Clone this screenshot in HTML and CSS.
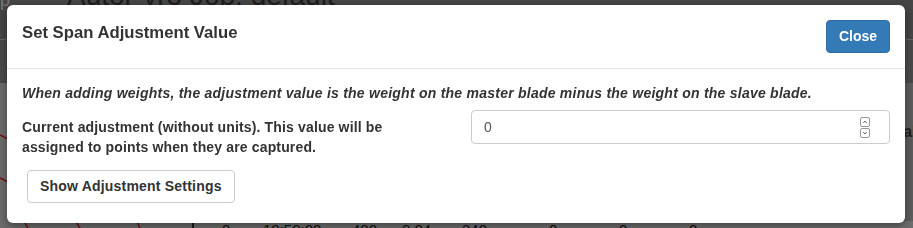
FILE: index.html
```html
<!DOCTYPE html>
<html>
  <head>
    <meta charset="UTF-8" />
    <title>Autor-vro | Job</title>
    <link rel="stylesheet" href="styles.css">
  </head>
  <body>
    <div class="page">
      <div class="topbar">
        <span class="brand">p</span>
        <h1 class="job-title">Autor-vro Job: default</h1>
      </div>
      <div class="toolbar"></div>
      <div class="content">
        <div class="chart">
          <svg viewBox="0 0 192 145" class="chart-lines">
            <polyline points="0,52 10,57" />
            <polyline points="0,95 8,99" />
            <polyline points="18,128 28,145" />
            <polyline points="70,130 80,145" />
            <polyline points="132,128 140,145" />
          </svg>
        </div>
        <div class="grid">
          <div class="grid-head"><span class="head-cell">Balance</span></div>
          <div class="grid-row">
            <span class="cell c-idx">0</span>
            <span class="cell c-time">10:50:00</span>
            <span class="cell c-rpm">400</span>
            <span class="cell c-amp">0.04</span>
            <span class="cell c-ang">340</span>
            <span class="cell c-a">0</span>
            <span class="cell c-b">0</span>
            <span class="cell c-c">0</span>
          </div>
        </div>
      </div>
    </div>

    <div class="backdrop"></div>

    <div class="modal">
      <div class="modal-header">
        <h4 class="modal-title">Set Span Adjustment Value</h4>
        <button class="btn btn-primary">Close</button>
      </div>
      <div class="modal-body">
        <p class="hint">When adding weights, the adjustment value is the weight on the master blade minus the weight on the slave blade.</p>
        <div class="form-row">
          <label class="control-label" for="span-adjust">Current adjustment (without units). This value will be assigned to points when they are captured.</label>
          <div class="control">
            <div class="number-input">
              <input id="span-adjust" type="text" value="0" />
              <span class="spinner">
                <svg viewBox="0 0 10 10" class="spin"><path d="M3 6 L5 4 L7 6" /></svg>
                <svg viewBox="0 0 10 10" class="spin"><path d="M3 4 L5 6 L7 4" /></svg>
              </span>
            </div>
          </div>
        </div>
        <button class="btn btn-default">Show Adjustment Settings</button>
      </div>
    </div>
  </body>
</html>
```

FILE: styles.css
```css
:root {
  --text: #333;
  --border: #ccc;
  --primary: #337ab7;
}

html,
body {
  height: 228px;
}

body {
  margin: 0;
  font-family: "Liberation Sans", Arial, sans-serif;
  font-size: 14px;
  color: var(--text);
  background: #dadada;
  overflow: hidden;
}

/* page underneath the dialog */
.page {
  width: 913px;
  height: 228px;
  display: flex;
  flex-direction: column;
  overflow: hidden;
}

.topbar {
  height: 40px;
  flex: none;
  background: #8a8a8a;
  border-bottom: 1px solid #c8c8c8;
  display: flex;
  align-items: flex-start;
  box-sizing: border-box;
}

.brand {
  color: #e8e8e8;
  font-size: 18px;
  line-height: 1;
  margin-top: -9px;
  width: 67px;
}

.job-title {
  margin: -18px 0 0 0;
  font-size: 28px;
  font-weight: normal;
  line-height: 1;
  color: #3a3a3a;
}

.toolbar {
  height: 43px;
  flex: none;
  background: #929292;
}

.content {
  height: 145px;
  display: flex;
}

.chart {
  width: 192px;
  background: #d6d6d6;
  border-right: 2px solid #333;
}

.chart-lines {
  display: block;
  width: 192px;
  height: 145px;
  fill: none;
  stroke: #e02020;
  stroke-width: 1.5;
}

.grid {
  flex: 1;
  display: flex;
  flex-direction: column;
}

.grid-head {
  height: 138px;
  flex: none;
  background: #b8b8b8;
  display: flex;
  justify-content: flex-end;
  align-items: center;
}

.head-cell {
  font-size: 16px;
  font-weight: bold;
  color: #444;
  margin-right: -40px;
  padding-bottom: 40px;
}

.grid-row {
  height: 7px;
  background: #dadada;
  position: relative;
  font-size: 15px;
  line-height: 17px;
  color: #222;
}

.cell {
  position: absolute;
  top: 0;
}

.c-idx { left: 28px; }
.c-time { left: 69px; }
.c-rpm { left: 158px; }
.c-amp { left: 208px; }
.c-ang { left: 268px; }
.c-a { left: 355px; }
.c-b { left: 425px; }
.c-c { left: 495px; }

.backdrop {
  position: fixed;
  inset: 0;
  background: rgba(0, 0, 0, 0.5);
}

/* dialog */
.modal {
  position: fixed;
  top: 5px;
  left: 7px;
  width: 898px;
  height: 218px;
  box-sizing: border-box;
  background: #fff;
  border-radius: 6px;
  box-shadow: 0 3px 9px rgba(0, 0, 0, 0.4);
  display: flex;
  flex-direction: column;
}

.modal-header {
  padding: 15px;
  border-bottom: 1px solid #e5e5e5;
  display: flex;
  justify-content: space-between;
  align-items: flex-start;
}

.modal-title {
  margin: 0;
  font-size: 16.7px;
  line-height: 26px;
  font-weight: bold;
}

.btn {
  font-family: inherit;
  font-size: 14px;
  font-weight: bold;
  line-height: 19px;
  padding: 6px 12px;
  border-radius: 4px;
  border: 1px solid transparent;
  cursor: pointer;
}

.btn-primary {
  background: var(--primary);
  border-color: #2e6da4;
  color: #fff;
}

.btn-default {
  background: #fff;
  border-color: var(--border);
  color: var(--text);
  align-self: flex-start;
  margin-left: 5px;
  letter-spacing: 0.2px;
}

.modal-body {
  padding: 15px;
  display: flex;
  flex-direction: column;
}

.hint {
  margin: 0 0 8px 0;
  font-weight: bold;
  font-style: italic;
  line-height: 18px;
  letter-spacing: 0.24px;
}

.form-row {
  display: flex;
  gap: 30px;
  margin-bottom: 13px;
}

.control-label {
  flex: 1;
  padding-top: 7px;
  font-weight: bold;
  line-height: 20px;
  letter-spacing: 0.15px;
}

.control {
  flex: 1;
}

.number-input {
  height: 34px;
  box-sizing: border-box;
  border: 1px solid var(--border);
  border-radius: 4px;
  display: flex;
  align-items: center;
  padding: 0 19px 0 12px;
}

.number-input input {
  flex: 1;
  border: none;
  outline: none;
  padding: 0;
  font-family: inherit;
  font-size: 14px;
  color: #555;
}

.spinner {
  display: flex;
  flex-direction: column;
  gap: 1px;
}

.spin {
  display: block;
  width: 10px;
  height: 10px;
  box-sizing: border-box;
  border: 1px solid #999;
  border-radius: 2px;
  fill: none;
  stroke: #333;
  stroke-width: 1.2;
}
```
